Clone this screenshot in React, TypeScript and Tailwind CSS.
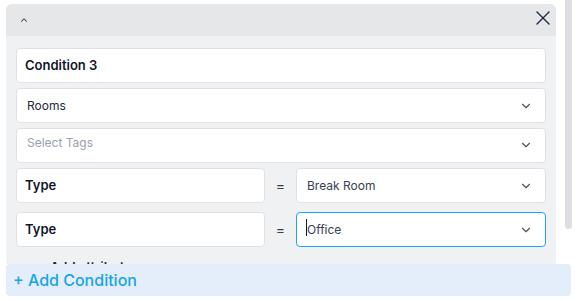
import { ChevronDown, ChevronUp, X } from "lucide-react";

function Chev() {
  return <ChevronDown className="h-3.5 w-3.5 text-gray-600" strokeWidth={2} />;
}

export default function App() {
  return (
    <div className="relative h-[301px] w-[578px] overflow-hidden bg-white font-['Inter',sans-serif] text-gray-900">
      <div className="flex">
        {/* condition card */}
        <div className="ml-[6px] mt-[4px] flex h-[260px] w-[550px] flex-col overflow-hidden rounded-t-md bg-[#f0f1f3]">
          <div className="flex h-[32px] shrink-0 items-center justify-between bg-[#e6e7e9] pl-[13px] pr-[1px]">
            <ChevronUp className="h-2.5 w-2.5 text-gray-700" strokeWidth={2.5} />
            <X className="-mt-[4px] h-6 w-6 text-gray-800" strokeWidth={1.4} />
          </div>
          <div className="flex shrink-0 flex-col gap-[5px] px-[10px] pt-[12px]">
            <div className="flex h-[35px] items-center rounded border border-[#dfe1e5] bg-white px-[8px] text-[13px] font-semibold">
              Condition 3
            </div>
            <div className="flex h-[35px] items-center justify-between rounded border border-[#dfe1e5] bg-white pl-[10px] pr-[12px] text-[12px] text-gray-800">
              <span>Rooms</span>
              <Chev />
            </div>
            <div className="flex h-[35px] items-start justify-between rounded border border-[#dfe1e5] bg-white pl-[10px] pr-[12px] text-[12px] text-gray-400">
              <span className="pt-[5px]">Select Tags</span>
              <span className="pt-[9px]"><Chev /></span>
            </div>
            <div className="flex h-[35px] items-center">
              <div className="flex h-full w-[249px] items-center rounded border border-[#dfe1e5] bg-white px-[8px] text-[13px] font-semibold">Type</div>
              <div className="w-[31px] text-center text-[14px] text-gray-700">=</div>
              <div className="flex h-full flex-1 items-center justify-between rounded border border-[#dfe1e5] bg-white pl-[10px] pr-[12px] text-[12px] text-gray-700">
                <span>Break Room</span>
                <Chev />
              </div>
            </div>
            <div className="mt-[4px] flex h-[35px] items-center">
              <div className="flex h-full w-[249px] items-center rounded border border-[#dfe1e5] bg-white px-[8px] text-[13px] font-semibold">Type</div>
              <div className="w-[31px] text-center text-[14px] text-gray-700">=</div>
              <div className="flex h-full flex-1 items-center justify-between rounded border border-[#1aa7ec] bg-white pl-[10px] pr-[12px] text-[12px] text-gray-700">
                <span className="relative">
                  <span className="absolute -left-px top-[-2px] h-[17px] w-px bg-gray-900" />
                  Office
                </span>
                <Chev />
              </div>
            </div>
            <div className="mt-[6px] pl-[22px] text-[13px] font-semibold text-gray-800">+ Add attribute</div>
          </div>
        </div>
        {/* scrollbar */}
        <div className="ml-[9px] h-[229px] w-[7px] rounded-b bg-[#dcdee2]" />
      </div>
      <div className="ml-[6px] flex h-[32px] w-[565px] items-center rounded bg-[#e3eefa] pl-[7px] text-[16px] font-medium text-[#1ba3e6]">
        + Add Condition
      </div>
    </div>
  );
}
